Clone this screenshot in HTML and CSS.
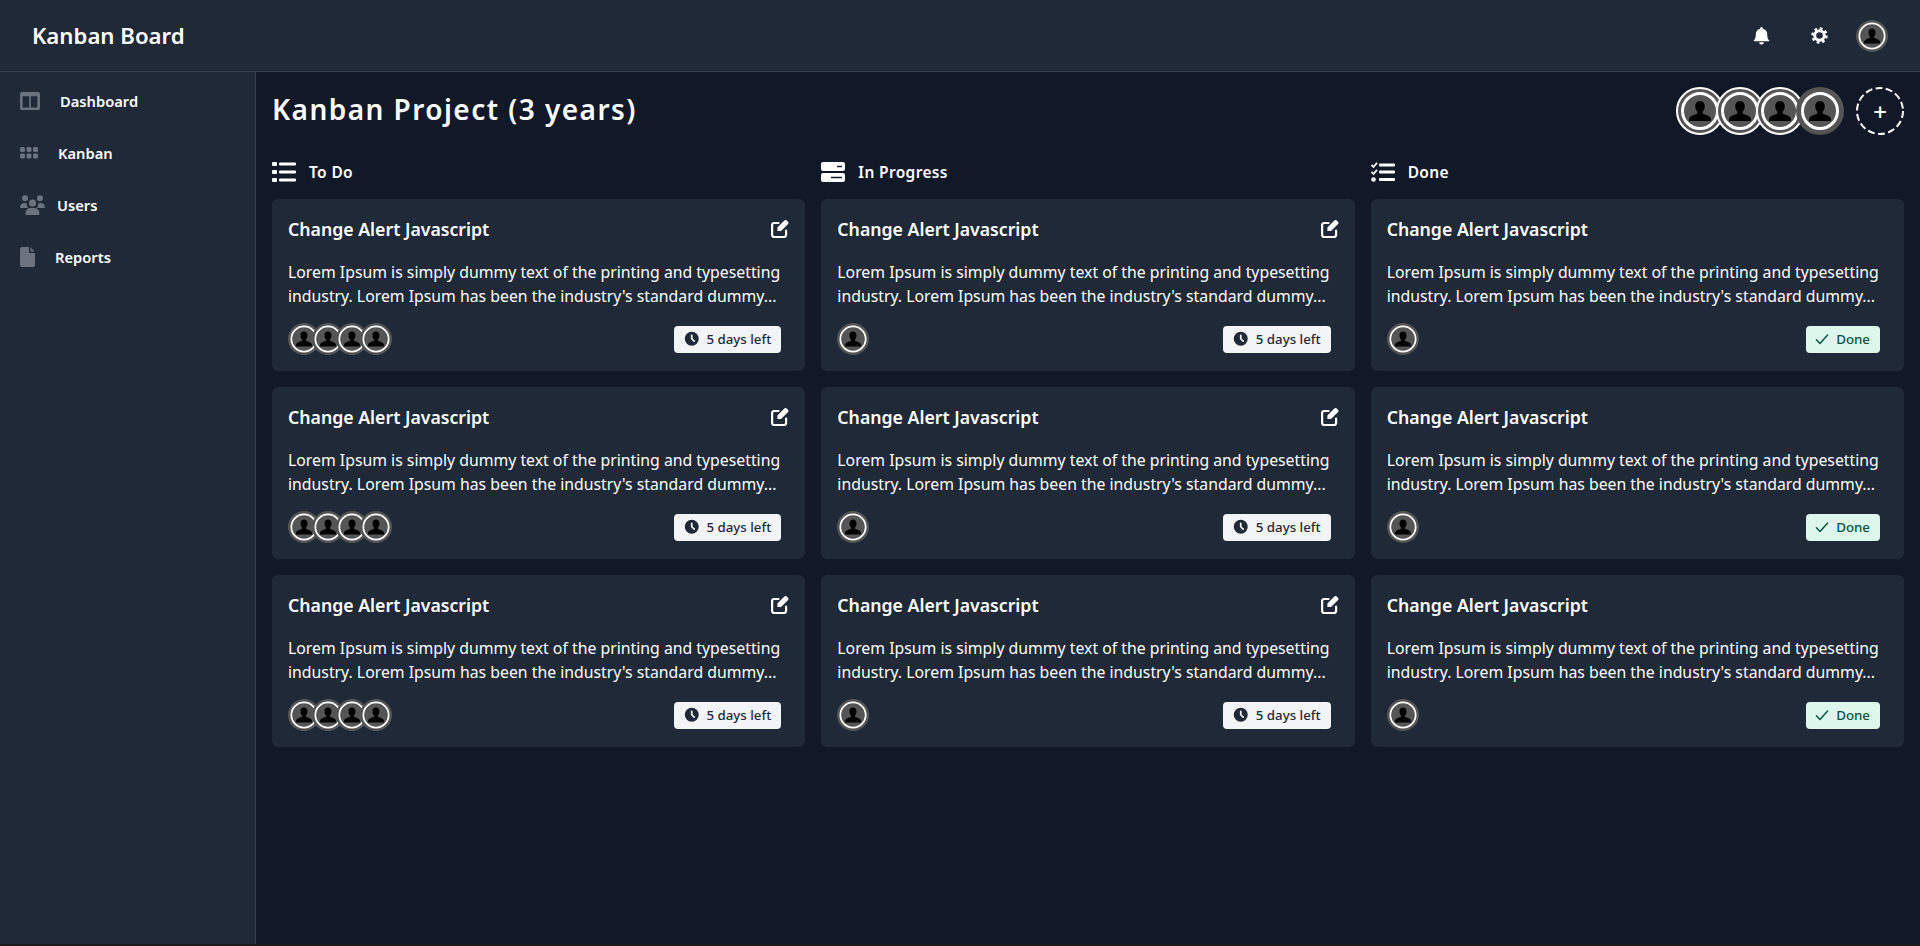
FILE: index.html
```html
<!DOCTYPE html>
<html lang="en">

<head>
  <meta charset="UTF-8">
  <meta name="viewport" content="width=device-width, initial-scale=1.0">
  <title>Kanban Board</title>
  <link rel="stylesheet" href="styles.css">
</head>

<body>
  <svg class="defs" width="0" height="0">
    <path id="person" d="M24 10c-4 0-6.400 3-6.400 7 0 3 1 5.600 2.800 7.400v2.400c-1 1.200-8.400 2.400-10.400 5.400-.8 1.200-1 2.800-1 4.800h30c0-2-.2-3.600-1-4.800-2-3-9.400-4.200-10.400-5.400v-2.400c1.800-1.800 2.800-4.400 2.800-7.400 0-4-2.400-7-6.400-7z" fill="#000" />
    <symbol id="avatar" viewBox="0 0 48 48">
      <circle cx="24" cy="24" r="24" fill="#555" />
      <circle cx="24" cy="24" r="19" fill="#555" stroke="#fff" stroke-width="2.600" />
      <use href="#person" transform="translate(24 24) scale(.82) translate(-24 -23.500)" />
    </symbol>
    <symbol id="avatar-big" viewBox="0 0 48 48">
      <circle cx="24" cy="24" r="24" fill="#555" />
      <circle cx="24" cy="24" r="17.500" fill="#555" stroke="#fff" stroke-width="3" />
      <use href="#person" transform="translate(24 24) scale(.74) translate(-24 -23.500)" />
    </symbol>
    <symbol id="clock" viewBox="0 0 20 20">
      <path fill="currentColor" fill-rule="evenodd" d="M10 18a8 8 0 1 0 0-16 8 8 0 0 0 0 16zm1-12a1 1 0 1 0-2 0v4c0 .27.1.52.3.7l2.830 2.830a1 1 0 0 0 1.410-1.410L11 9.590V6z" />
    </symbol>
    <symbol id="check" viewBox="0 0 20 20">
      <path fill="none" stroke="currentColor" stroke-width="1.800" stroke-linecap="round" stroke-linejoin="round" d="M3 11l4.500 4.500L17 5" />
    </symbol>
    <symbol id="edit" viewBox="0 0 18 18">
      <path fill="currentColor" d="M15.800.6a1.800 1.800 0 0 0-2.500 0L6.400 7.500v3.600H10l6.900-6.900a1.800 1.800 0 0 0 0-2.500l-1.100-1.100z" />
      <path fill="none" stroke="currentColor" stroke-width="2.200" stroke-linecap="round" d="M7.500 3H3.200A2.100 2.100 0 0 0 1.100 5.100v9.800A2.100 2.100 0 0 0 3.200 17h9.800a2.100 2.100 0 0 0 2.100-2.100v-4.400" />
    </symbol>
  </svg>

  <header class="topbar">
    <span class="brand">Kanban Board</span>
    <div class="topbar-actions">
      <svg class="top-icon bell" viewBox="0 0 20 20"><path fill="currentColor" d="M10 1a1.300 1.300 0 0 0-1.300 1.300v.5A6 6 0 0 0 4 8.700c0 3.800-.8 5.300-2 6.300-.4.300-.2 1 .4 1h15.200c.6 0 .8-.7.400-1-1.200-1-2-2.500-2-6.300a6 6 0 0 0-4.700-5.900v-.5A1.300 1.300 0 0 0 10 1zM7.500 17a2.500 2.500 0 0 0 5 0h-5z" /></svg>
      <svg class="top-icon gear" viewBox="0 0 20 20"><g fill="none" stroke="currentColor"><circle cx="10" cy="10" r="5.600" stroke-width="3.400" /><circle cx="10" cy="10" r="8.200" stroke-width="3" stroke-dasharray="3.220 3.220" /></g></svg>
      <svg class="top-avatar"><use href="#avatar" /></svg>
    </div>
  </header>

  <div class="layout">
    <aside class="sidebar">
      <a class="nav-item">
        <svg class="nav-icon" viewBox="0 0 20 18"><path fill="currentColor" fill-rule="evenodd" d="M2 0h16a2 2 0 0 1 2 2v14a2 2 0 0 1-2 2H2a2 2 0 0 1-2-2V2a2 2 0 0 1 2-2zm.6 4.300v11.200h6.600V4.300H2.600zm8.200 0v11.200h6.600V4.300h-6.600z" /></svg>
        <span class="nav-label nav-dashboard">Dashboard</span>
      </a>
      <a class="nav-item">
        <svg class="nav-icon nav-icon-kanban" viewBox="0 0 18 12"><g fill="currentColor"><rect width="5" height="5" rx="1.500" /><rect x="6.500" width="5" height="5" rx="1.500" /><rect x="13" width="5" height="5" rx="1.500" /><rect y="6.500" width="5" height="5" rx="1.500" /><rect x="6.500" y="6.500" width="5" height="5" rx="1.500" /><rect x="13" y="6.500" width="5" height="5" rx="1.500" /></g></svg>
        <span class="nav-label nav-kanban">Kanban</span>
      </a>
      <a class="nav-item">
        <svg class="nav-icon nav-icon-users" viewBox="0 0 25 20"><g fill="currentColor"><circle cx="5" cy="3.300" r="3" /><circle cx="20" cy="3.300" r="3" /><circle cx="12.500" cy="8" r="3.600" /><path d="M0 12.500C0 9.500 2 8 4.500 8c1 0 1.800.2 2.500.7-.4 1.500.2 3.300 1.300 4.300H.5c-.3 0-.5-.2-.5-.5zM25 12.500c0-3-2-4.500-4.500-4.500-1 0-1.800.2-2.500.7.4 1.500-.2 3.300-1.300 4.300h7.800c.3 0 .5-.2.500-.5zM5.500 18.500c0-3.500 2.500-5.500 5-5.500h4c2.500 0 5 2 5 5.500 0 .8-.7 1.500-1.500 1.500H7c-.8 0-1.500-.7-1.500-1.500z" /></g></svg>
        <span class="nav-label nav-users">Users</span>
      </a>
      <a class="nav-item">
        <svg class="nav-icon nav-icon-reports" viewBox="0 0 15 20"><path fill="currentColor" d="M2 0h7v5a1 1 0 0 0 1 1h5v12a2 2 0 0 1-2 2H2a2 2 0 0 1-2-2V2a2 2 0 0 1 2-2zM10.500.3L14.700 4.500H10.500z" /></svg>
        <span class="nav-label nav-reports">Reports</span>
      </a>
    </aside>

    <main class="content">
      <div class="project-head">
        <h1 class="project-title">Kanban Project (3 years)</h1>
        <div class="project-people">
          <div class="people-stack">
            <svg class="big-avatar"><use href="#avatar-big" /></svg>
            <svg class="big-avatar ringed"><use href="#avatar-big" /></svg>
            <svg class="big-avatar ringed"><use href="#avatar-big" /></svg>
            <svg class="big-avatar ringed"><use href="#avatar-big" /></svg>
          </div>
          <button class="add-btn">
            <svg class="add-ring" viewBox="0 0 48 48"><circle cx="24" cy="24" r="23" fill="none" stroke="#fff" stroke-width="2" stroke-dasharray="7 3.320" /></svg>
            +
          </button>
        </div>
      </div>

      <div class="board" id="board"></div>
    </main>
  </div>

  <script>
    const columns = [
      {
        name: 'To Do', people: 4, done: false,
        icon: '<svg class="col-icon" viewBox="0 0 24 20"><g fill="currentColor"><rect y="0" width="5" height="4" rx="1" /><rect y="8" width="5" height="4" rx="1" /><rect y="16" width="5" height="4" rx="1" /><rect x="7" y="0.500" width="17" height="3" rx="1" /><rect x="7" y="8.500" width="17" height="3" rx="1" /><rect x="7" y="16.500" width="17" height="3" rx="1" /></g></svg>'
      },
      {
        name: 'In Progress', people: 1, done: false,
        icon: '<svg class="col-icon" viewBox="0 0 24 20"><path fill="currentColor" fill-rule="evenodd" d="M2 0h20a2 2 0 0 1 2 2v5a2 2 0 0 1-2 2H2a2 2 0 0 1-2-2V2a2 2 0 0 1 2-2zm14 3.800v1.400h5V3.800h-5zM2 11h20a2 2 0 0 1 2 2v5a2 2 0 0 1-2 2H2a2 2 0 0 1-2-2v-5a2 2 0 0 1 2-2zm8 3.800v1.400h11v-1.400H10z" /></svg>'
      },
      {
        name: 'Done', people: 1, done: true,
        icon: '<svg class="col-icon" viewBox="0 0 24 20"><g fill="currentColor"><rect x="8" y="1.500" width="16" height="3" rx="1" /><rect x="8" y="8.500" width="16" height="3" rx="1" /><rect x="8" y="16" width="16" height="3" rx="1" /><circle cx="2.500" cy="17.500" r="2.300" /></g><path fill="none" stroke="currentColor" stroke-width="1.800" d="M.5 3l2 2L6 .8M.5 10l2 2L6 7.800" /></svg>'
      }
    ];

    function avatars(n) {
      let out = '';
      for (let i = 0; i < n; i++) {
        out += '<svg class="card-avatar"><use href="#avatar" /></svg>';
      }
      return out;
    }

    function card(col) {
      const badge = col.done
        ? '<span class="badge badge-done"><svg class="badge-icon"><use href="#check" /></svg>Done</span>'
        : '<span class="badge"><svg class="badge-icon"><use href="#clock" /></svg>5 days left</span>';
      const edit = col.done ? '' : '<svg class="edit-icon"><use href="#edit" /></svg>';
      return `<article class="card">
        <div class="card-head"><h3 class="card-title">Change Alert Javascript</h3>${edit}</div>
        <p class="card-text">Lorem Ipsum is simply dummy text of the printing and typesetting industry. Lorem Ipsum has been the industry's standard dummy...</p>
        <div class="card-foot"><div class="card-people">${avatars(col.people)}</div>${badge}</div>
      </article>`;
    }

    let html = '';
    columns.forEach(col => {
      html += `<section class="column"><div class="column-head">${col.icon}<span class="column-name">${col.name}</span></div>`;
      html += card(col) + card(col) + card(col);
      html += '</section>';
    });
    document.querySelector('#board').innerHTML = html;
  </script>
</body>

</html>
```

FILE: styles.css
```css
* {
  box-sizing: border-box;
}

html,
body {
  height: 946px;
  margin: 0;
  overflow: hidden;
}

body {
  background: #111827;
  color: #fff;
  font-family: "Noto Sans", sans-serif;
  border-bottom: 2px solid #1c1c1c;
}

.defs {
  position: absolute;
}

h1,
h3,
p {
  margin: 0;
}

.topbar {
  align-items: center;
  background: #1f2937;
  border-bottom: 1px solid #374151;
  display: flex;
  height: 72px;
  justify-content: space-between;
  padding: 0 32px;
}

.brand {
  font-size: 22.200px;
  font-weight: 600;
}

.topbar-actions {
  align-items: center;
  display: flex;
}

.top-icon {
  color: #fff;
}

.bell {
  height: 19px;
  margin-right: 40px;
  width: 19px;
}

.gear {
  height: 17px;
  margin-right: 28px;
  width: 17px;
}

.top-avatar {
  height: 32px;
  width: 32px;
}

.layout {
  display: flex;
  height: 872px;
}

.sidebar {
  background: #1f2937;
  border-right: 1px solid #374151;
  flex: 0 0 256px;
  padding: 3px 20px;
}

.nav-item {
  align-items: center;
  color: #fff;
  display: flex;
  font-size: 14.700px;
  font-weight: 600;
  height: 52px;
}

.nav-icon {
  color: #6b7280;
  height: 18px;
  width: 20px;
}

.nav-icon-kanban {
  height: 12px;
  width: 18px;
}

.nav-icon-users {
  height: 20px;
  width: 25px;
}

.nav-icon-reports {
  height: 20px;
  width: 15px;
}

.nav-dashboard {
  margin-left: 20px;
}

.nav-kanban {
  margin-left: 20px;
}

.nav-users {
  margin-left: 12px;
}

.nav-reports {
  margin-left: 20px;
}

.content {
  flex: 1;
  padding: 0 16px;
}

.project-head {
  align-items: center;
  display: flex;
  height: 78px;
  justify-content: space-between;
  margin-bottom: 10px;
}

.project-title {
  font-size: 28px;
  font-weight: 600;
  letter-spacing: 1.450px;
  margin-bottom: 4px;
}

.project-people {
  align-items: center;
  column-gap: 12px;
  display: flex;
}

.people-stack {
  display: flex;
  flex-direction: row-reverse;
}

.big-avatar {
  height: 48px;
  margin-left: -8px;
  width: 48px;
}

.ringed {
  border-radius: 50%;
  outline: 2.500px solid #fff;
  outline-offset: -2.500px;
}

.add-btn {
  align-items: center;
  background: none;
  border: none;
  color: #fff;
  display: flex;
  font-family: inherit;
  font-size: 24px;
  font-weight: 500;
  height: 48px;
  justify-content: center;
  padding: 0;
  position: relative;
  width: 48px;
}

.add-ring {
  height: 48px;
  left: 0;
  position: absolute;
  top: 0;
  width: 48px;
}

.board {
  column-gap: 16px;
  display: grid;
  grid-template-columns: repeat(3, 1fr);
}

.column-head {
  align-items: center;
  column-gap: 13px;
  display: flex;
  height: 24px;
  margin-bottom: 15px;
}

.col-icon {
  color: #fff;
  height: 20px;
  width: 24px;
}

.column-name {
  font-size: 15.500px;
  font-weight: 600;
  letter-spacing: .35px;
}

.card {
  background: #1f2937;
  border-radius: 6px;
  height: 172px;
  margin-bottom: 16px;
  padding: 16px;
}

.card-head {
  align-items: center;
  display: flex;
  height: 28px;
  justify-content: space-between;
}

.card-title {
  font-size: 17.700px;
  font-weight: 600;
}

.edit-icon {
  color: #fff;
  height: 18px;
  width: 18px;
}

.card-text {
  font-size: 15.800px;
  line-height: 24px;
  margin-top: 17px;
}

.card-foot {
  align-items: center;
  display: flex;
  justify-content: space-between;
  margin-top: 15px;
  padding-right: 8px;
}

.card-people {
  display: flex;
  flex-direction: row-reverse;
}

.card-avatar {
  height: 32px;
  margin-right: -8px;
  width: 32px;
}

.badge {
  align-items: center;
  background: #f3f4f6;
  border-radius: 4px;
  color: #1f2937;
  column-gap: 6px;
  display: flex;
  font-size: 13.300px;
  font-weight: 500;
  height: 27px;
  padding: 0 10px 0 9px;
}

.badge-icon {
  height: 17.500px;
  width: 17.500px;
}

.badge-done {
  background: #def7ec;
  color: #03543f;
  padding-left: 8px;
}

.badge-done .badge-icon {
  height: 16px;
  width: 16px;
}
```
